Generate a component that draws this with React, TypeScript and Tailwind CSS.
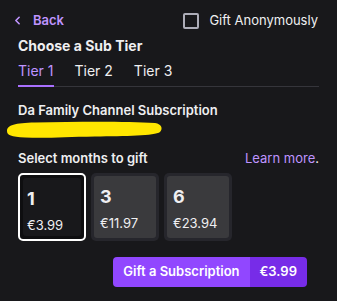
import { ChevronLeft } from 'lucide-react';

const options = [
  { months: 1, price: '€3.99', selected: true },
  { months: 3, price: '€11.97', selected: false },
  { months: 6, price: '€23.94', selected: false },
];

export default function App() {
  return (
    <div
      className="w-[337px] h-[301px] bg-[#18181b] text-[#efeff1] overflow-hidden"
      style={{ fontFamily: 'Inter, "Noto Sans", sans-serif' }}
    >
      <div className="flex items-center justify-between pl-[11px] pr-[19px] pt-[12px] h-[29px]">
        <div className="flex items-center gap-[9px] text-[#bf94ff] text-[13px] font-semibold">
          <ChevronLeft className="w-[13px] h-[13px]" strokeWidth={3} />
          <span>Back</span>
        </div>
        <div className="flex items-center gap-[10px] text-[13px]">
          <div className="w-[16px] h-[16px] border-2 border-[#adadb8] rounded-[2px]" />
          <span>Gift Anonymously</span>
        </div>
      </div>

      <div className="px-[18px]">
        <h2 className="mt-[8px] text-[14px] font-bold leading-[18px]">Choose a Sub Tier</h2>

        <div className="mt-[7px] flex border-b border-[#35353b]">
          {['Tier 1', 'Tier 2', 'Tier 3'].map((t, i) => (
            <div
              key={t}
              className={
                'pb-[5px] mr-[21px] text-[14px] leading-[18px] border-b-2 -mb-px ' +
                (i === 0 ? 'text-[#bf94ff] border-[#a970ff]' : 'border-transparent')
              }
            >
              {t}
            </div>
          ))}
        </div>

        <div className="mt-[15px] text-[13px] font-semibold leading-[16px]">
          Da Family Channel Subscription
        </div>
      </div>

      {/* scribble */}
      <svg width="160" height="22" viewBox="0 0 160 22" className="block ml-[5px] mt-[1px]">
        <path
          d="M2 12 C2 6 10 4 30 3.5 C70 2.5 120 2 150 4 C157 5 158 10 155 13 C150 17 120 17 90 17.5 C60 18 40 19.5 20 18.5 C6 18 2 16 2 12 Z"
          fill="#ffe600"
        />
      </svg>

      <div className="px-[18px]">
        <div className="mt-[9px] flex items-center justify-between text-[13px] leading-[16px]">
          <span className="font-semibold">Select months to gift</span>
          <span>
            <span className="text-[#bf94ff]">Learn more</span>.
          </span>
        </div>

        <div className="mt-[7px] flex gap-[5px]">
          {options.map((o) => (
            <div
              key={o.months}
              className={
                'w-[68px] h-[68px] rounded-[5px] p-[3px] ' +
                (o.selected ? 'border-2 border-white bg-[#0e0e10]' : 'bg-[#26262c]')
              }
            >
              <div
                className={
                  'w-full h-full rounded-[3px] pt-[11px] ' +
                  (o.selected ? 'bg-[#18181b] pl-[4px]' : 'bg-[#3a3a3d] pl-[6px]')
                }
              >
                <div className="text-[18px] font-bold leading-[20px]">{o.months}</div>
                <div className="mt-[8px] text-[13px] leading-[16px]">{o.price}</div>
              </div>
            </div>
          ))}
        </div>

        <div className="mt-[16px] flex justify-end pr-[12px]">
          <div className="flex h-[30px] rounded-[4px] overflow-hidden text-[13px] font-semibold text-white">
            <div className="bg-[#9147ff] px-[10px] flex items-center">Gift a Subscription</div>
            <div className="bg-[#772ce8] px-[10px] flex items-center">€3.99</div>
          </div>
        </div>
      </div>
    </div>
  );
}
